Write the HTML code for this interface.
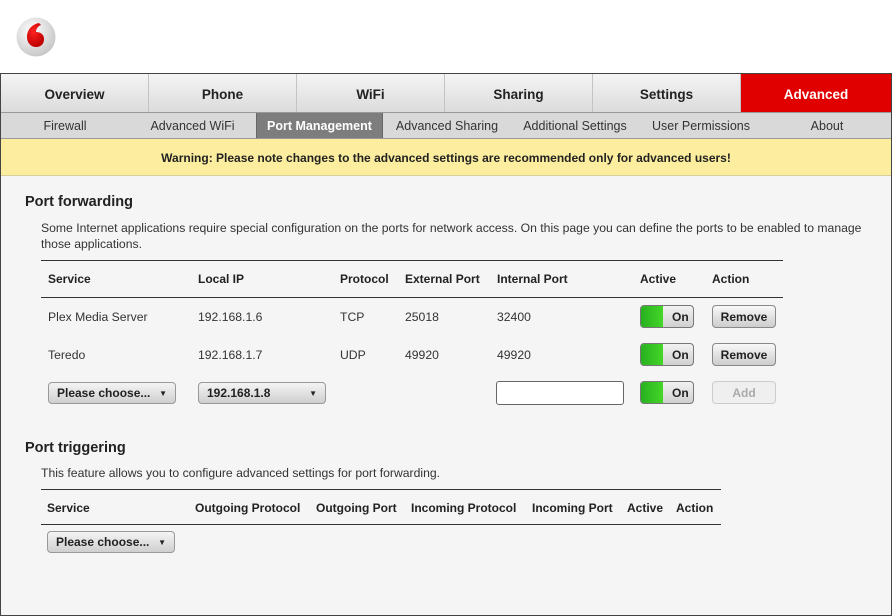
<!DOCTYPE html>
<html><head><style>
*{box-sizing:border-box;margin:0;padding:0}
body{width:892px;height:616px;background:#fff;font-family:"Liberation Sans",sans-serif;position:relative;overflow:hidden;color:#222}
.a{position:absolute;white-space:nowrap}
.frame{position:absolute;left:0;top:73px;width:892px;height:543px;border:1px solid #444;background:#f5f5f5}
.nav{position:absolute;left:1px;top:74px;width:890px;height:39px;background:linear-gradient(#f4f4f4,#dcdcdc);border-bottom:1px solid #999}
.nav div{position:absolute;top:0;height:38px;line-height:41px;text-align:center;font-weight:bold;font-size:13.5px;border-right:1px solid #c4c4c4;color:#222}
.sub{position:absolute;left:1px;top:113px;width:890px;height:26px;background:#d9d9d9;border-bottom:1px solid #999}
.sub div{position:absolute;top:0;height:25px;line-height:27px;text-align:center;font-size:12.5px;color:#333}
.warn{position:absolute;left:1px;top:139px;width:890px;height:37px;background:#fcee9e;border-bottom:1px solid #d8cf9a;text-align:center;line-height:39px;font-size:12px;font-weight:bold}
h2{position:absolute;font-size:14.5px;font-weight:bold;color:#222}
.t{font-size:12.2px;color:#333}
.th{font-size:12px;font-weight:bold;color:#222}
.line{position:absolute;height:1px;background:#333}
.sel{position:absolute;height:22px;border:1px solid #999;border-radius:4px;background:linear-gradient(#f4f4f4,#cfcfcf);font-size:12px;font-weight:bold;line-height:21px;padding-left:8px}
.sel:after{content:"▼";position:absolute;right:8px;top:0;font-size:8px}
.tog{position:absolute;width:54px;height:23px;border:1px solid #777;border-radius:4px;overflow:hidden;background:linear-gradient(#f2f2f2,#d0d0d0);font-size:12px;font-weight:bold;line-height:23px}
.tog i{position:absolute;left:0;top:0;width:22px;height:23px;background:linear-gradient(90deg,#28b020,#44d628)}
.tog span{position:absolute;left:31px}
.btn{position:absolute;width:64px;height:23px;border:1px solid #888;border-radius:4px;background:linear-gradient(#f8f8f8,#cdcdcd);font-size:12px;font-weight:bold;text-align:center;line-height:23px}
</style></head><body>
<svg class="a" style="left:16px;top:17px" width="40" height="40" viewBox="0 0 40 40">
<defs><radialGradient id="g" cx="0.4" cy="0.35" r="0.7"><stop offset="0" stop-color="#fff"/><stop offset="1" stop-color="#c4c4c4"/></radialGradient>
<radialGradient id="r" cx="0.4" cy="0.35" r="0.7"><stop offset="0" stop-color="#f22"/><stop offset="1" stop-color="#b00"/></radialGradient></defs>
<circle cx="20" cy="20" r="19.5" fill="url(#g)"/>
<path d="M23 6c-6 1-12 6-12 14 0 6 4 10 9 10 5 0 8-3 8-8 0-5-4-7-8-7 0-3 2-6 5-7z" fill="url(#r)"/>
</svg>
<div class="frame"></div>
<div class="nav">
<div style="left:0;width:148px">Overview</div>
<div style="left:148px;width:148px">Phone</div>
<div style="left:296px;width:148px">WiFi</div>
<div style="left:444px;width:148px">Sharing</div>
<div style="left:592px;width:148px">Settings</div>
<div style="left:740px;width:150px;background:#e00000;color:#fff;border:none">Advanced</div>
</div>
<div class="sub">
<div style="left:0;width:128px">Firewall</div>
<div style="left:128px;width:127px">Advanced WiFi</div>
<div style="left:255px;width:127px;background:#7d7d7d;color:#fff;font-weight:bold;border-left:1px solid #666;border-right:1px solid #666">Port Management</div>
<div style="left:382px;width:128px">Advanced Sharing</div>
<div style="left:510px;width:128px">Additional Settings</div>
<div style="left:638px;width:124px">User Permissions</div>
<div style="left:762px;width:128px">About</div>
</div>
<div class="warn">Warning: Please note changes to the advanced settings are recommended only for advanced users!</div>

<h2 class="a" style="left:25px;top:194px">Port forwarding</h2>
<div class="a t" style="left:41px;top:220px;line-height:16px">Some Internet applications require special configuration on the ports for network access. On this page you can define the ports to be enabled to manage<br>those applications.</div>
<div class="line" style="left:41px;top:260px;width:742px"></div>
<div class="a th" style="left:48px;top:272px">Service</div>
<div class="a th" style="left:198px;top:272px">Local IP</div>
<div class="a th" style="left:340px;top:272px">Protocol</div>
<div class="a th" style="left:405px;top:272px">External Port</div>
<div class="a th" style="left:497px;top:272px">Internal Port</div>
<div class="a th" style="left:640px;top:272px">Active</div>
<div class="a th" style="left:712px;top:272px">Action</div>
<div class="line" style="left:41px;top:297px;width:742px"></div>

<div class="a t" style="left:48px;top:310px">Plex Media Server</div>
<div class="a t" style="left:198px;top:310px">192.168.1.6</div>
<div class="a t" style="left:340px;top:310px">TCP</div>
<div class="a t" style="left:405px;top:310px">25018</div>
<div class="a t" style="left:497px;top:310px">32400</div>
<div class="tog" style="left:640px;top:305px"><i></i><span>On</span></div>
<div class="btn" style="left:712px;top:305px">Remove</div>

<div class="a t" style="left:48px;top:348px">Teredo</div>
<div class="a t" style="left:198px;top:348px">192.168.1.7</div>
<div class="a t" style="left:340px;top:348px">UDP</div>
<div class="a t" style="left:405px;top:348px">49920</div>
<div class="a t" style="left:497px;top:348px">49920</div>
<div class="tog" style="left:640px;top:343px"><i></i><span>On</span></div>
<div class="btn" style="left:712px;top:343px">Remove</div>

<div class="sel" style="left:48px;top:382px;width:128px">Please choose...</div>
<div class="sel" style="left:198px;top:382px;width:128px">192.168.1.8</div>
<div class="a" style="left:496px;top:381px;width:128px;height:24px;border:1px solid #666;border-radius:3px;background:#fff"></div>
<div class="tog" style="left:640px;top:381px"><i></i><span>On</span></div>
<div class="btn" style="left:712px;top:381px;color:#aaa;border-color:#ccc;background:#efefef">Add</div>

<h2 class="a" style="left:25px;top:440px">Port triggering</h2>
<div class="a t" style="left:41px;top:466px">This feature allows you to configure advanced settings for port forwarding.</div>
<div class="line" style="left:41px;top:489px;width:680px"></div>
<div class="a th" style="left:47px;top:501px">Service</div>
<div class="a th" style="left:195px;top:501px">Outgoing Protocol</div>
<div class="a th" style="left:316px;top:501px">Outgoing Port</div>
<div class="a th" style="left:411px;top:501px">Incoming Protocol</div>
<div class="a th" style="left:532px;top:501px">Incoming Port</div>
<div class="a th" style="left:627px;top:501px">Active</div>
<div class="a th" style="left:676px;top:501px">Action</div>
<div class="line" style="left:41px;top:524px;width:680px"></div>
<div class="sel" style="left:47px;top:531px;width:128px">Please choose...</div>
</body></html>
